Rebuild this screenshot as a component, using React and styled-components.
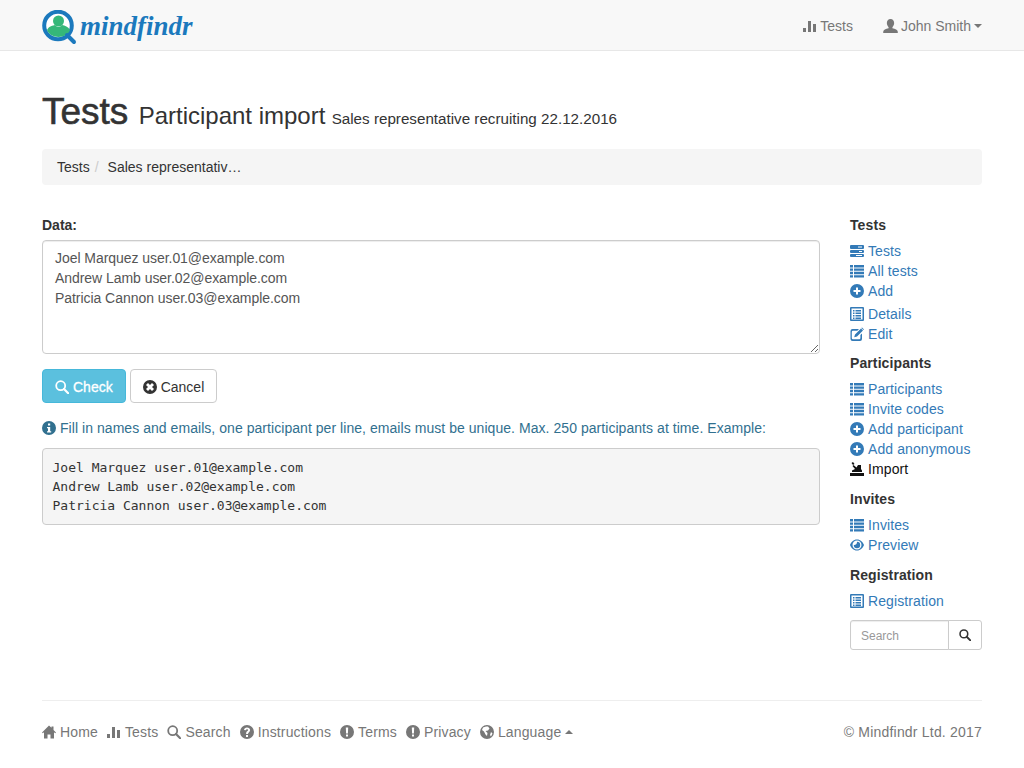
import React from "react";
import styled, { createGlobalStyle } from "styled-components";

const Global = createGlobalStyle`
  * { box-sizing: border-box; }
  html, body { margin: 0; padding: 0; }
  body {
    font-family: "Liberation Sans", Arial, sans-serif;
    font-size: 14px;
    line-height: 20px;
    color: #333;
    background: #fff;
  }
`;

const Navbar = styled.header`
  height: 51px;
  background: #f8f8f8;
  border-bottom: 1px solid #e7e7e7;
`;

const Wrap = styled.div`
  width: 940px;
  margin: 0 0 0 42px;
`;

const NavInner = styled(Wrap)`
  height: 50px;
  display: flex;
  align-items: center;
  justify-content: space-between;
`;

const Brand = styled.div`
  display: flex;
  align-items: center;
  height: 50px;
  padding-top: 5px;
`;

const BrandText = styled.span`
  font-family: "Liberation Serif", serif;
  font-style: italic;
  font-weight: 700;
  font-size: 27px;
  line-height: 36px;
  color: #1b79bd;
  margin-left: 2px;
  margin-top: -4px;
`;

const NavLinks = styled.nav`
  display: flex;
  gap: 30px;
  padding-top: 2px;
`;

const NavLink = styled.span`
  display: inline-flex;
  align-items: center;
  gap: 3px;
  color: #777;
`;

const Caret = styled.i`
  display: inline-block;
  width: 0;
  height: 0;
  margin-left: 0;
  border-left: 4px solid transparent;
  border-right: 4px solid transparent;
  ${(p) => (p.$up ? "border-bottom: 4px solid #777;" : "border-top: 4px solid #777;")}
`;

const Heading = styled.h1`
  margin: 41px 0 0;
  font-size: 37px;
  line-height: 40px;
  font-weight: 500;
  color: #333;
  -webkit-text-stroke: 0.6px #333;
  white-space: nowrap;
`;

const Sub = styled.small`
  font-size: 24px;
  color: #333;
  font-weight: 400;
  -webkit-text-stroke: 0;
`;

const SubSmall = styled.small`
  font-size: 15.2px;
  color: #333;
  font-weight: 400;
  margin-left: -4px;
  -webkit-text-stroke: 0;
`;

const Breadcrumb = styled.div`
  margin-top: 10px;
  height: 36px;
  padding: 8px 15px;
  background: #f5f5f5;
  border-radius: 4px;
  display: flex;
`;

const Sep = styled.span`
  color: #ccc;
  padding: 0 5px;
  margin-right: 4px;
`;

const Columns = styled.div`
  display: flex;
  justify-content: space-between;
  margin-top: 30px;
`;

const Main = styled.main`
  width: 778px;
`;

const Label = styled.label`
  display: block;
  font-weight: 700;
  margin-top: 0;
  margin-bottom: 5px;
`;

const TextArea = styled.textarea`
  display: block;
  width: 778px;
  height: 114px;
  padding: 7px 12px;
  border: 1px solid #ccc;
  border-radius: 4px;
  font: 14px/20px "Liberation Sans", Arial, sans-serif;
  letter-spacing: -0.05px;
  color: #555;
  box-shadow: inset 0 1px 1px rgba(0, 0, 0, 0.075);
`;

const Buttons = styled.div`
  display: flex;
  gap: 4px;
  margin-top: 15px;
`;

const Button = styled.button`
  display: inline-flex;
  align-items: center;
  gap: 4px;
  height: 34px;
  padding: 2px 12px 0;
  border: 1px solid ${(p) => (p.$info ? "#46b8da" : "#ccc")};
  border-radius: 4px;
  background: ${(p) => (p.$info ? "#5bc0de" : "#fff")};
  color: ${(p) => (p.$info ? "#fff" : "#333")};
  font: 14px/20px "Liberation Sans", Arial, sans-serif;
  -webkit-text-stroke: ${(p) => (p.$info ? "0.3px #fff" : "0")};
`;

const Help = styled.p`
  display: flex;
  align-items: center;
  gap: 4px;
  margin: 15px 0 0;
  color: #31708f;
  letter-spacing: 0.05px;
`;

const Pre = styled.pre`
  margin: 10px 0 0;
  padding: 8.5px 9.5px;
  height: 77px;
  font-family: "DejaVu Sans Mono", "Liberation Mono", monospace;
  font-size: 13px;
  line-height: 19px;
  color: #333;
  background: #f5f5f5;
  border: 1px solid #ccc;
  border-radius: 4px;
`;

const Side = styled.aside`
  width: 132px;
  letter-spacing: 0.1px;
`;

const SideTitle = styled.div`
  font-weight: 700;
  margin-top: ${(p) => p.$top}px;
  margin-bottom: 6px;
`;

const SideLink = styled.div`
  display: flex;
  align-items: center;
  gap: 4px;
  height: 20px;
  margin-top: ${(p) => (p.$gap ? "3px" : "0")};
  color: ${(p) => (p.$dark ? "#111" : "#337ab7")};
`;

const SearchGroup = styled.div`
  display: flex;
  height: 30px;
  margin-top: 9px;
`;

const SearchInput = styled.input`
  width: 99px;
  height: 30px;
  padding: 6px 10px 4px;
  border: 1px solid #ccc;
  border-radius: 3px 0 0 3px;
  font: 12px/18px "Liberation Sans", Arial, sans-serif;
  box-shadow: inset 0 1px 1px rgba(0, 0, 0, 0.075);
  &::placeholder { color: #999; }
`;

const SearchButton = styled.button`
  width: 34px;
  height: 30px;
  margin-left: -1px;
  padding: 0;
  display: flex;
  align-items: center;
  justify-content: center;
  background: #fff;
  border: 1px solid #ccc;
  border-radius: 0 3px 3px 0;
`;

const Footer = styled.footer`
  margin-top: 50px;
  border-top: 1px solid #eee;
  padding-top: 21px;
  display: flex;
  justify-content: space-between;
  color: #777;
`;

const FootLinks = styled.div`
  display: flex;
  gap: 9px;
  letter-spacing: 0.15px;
`;

const FootLink = styled.span`
  display: inline-flex;
  align-items: center;
  gap: 4px;
`;

const Copyright = styled.span`
  letter-spacing: 0.2px;
`;

// all drawn on a 14x14 grid, like the glyphicons they stand in for
const icons = {
  stats: <path d="M0 9h3v4H0zM5 2h3v11H5zM10 5h3v8h-3z" />,
  user: <path d="M7 0c2.200 0 3.400 1.600 3.400 3.800 0 1.600-.7 3-1.600 3.800v1.100c2.600.7 5 1.500 5 3.300v1H.2v-1c0-1.800 2.400-2.600 5-3.300V7.600C4.300 6.800 3.600 5.400 3.600 3.800 3.600 1.600 4.800 0 7 0z" />,
  tasks: <path fillRule="evenodd" d="M1 1h12a1 1 0 0 1 1 1v2a1 1 0 0 1-1 1H1a1 1 0 0 1-1-1V2a1 1 0 0 1 1-1zm7 1.500v1h4v-1zM1 6h12a1 1 0 0 1 1 1v1a1 1 0 0 1-1 1H1a1 1 0 0 1-1-1V7a1 1 0 0 1 1-1zm8 1v1h3V7zM1 10h12a1 1 0 0 1 1 1v1a1 1 0 0 1-1 1H1a1 1 0 0 1-1-1v-1a1 1 0 0 1 1-1zm5 1v1h6v-1z" />,
  list: <path d="M0 1h3v2.400H0zM4 1h10v2.400H4zM0 4.400h3v2.400H0zM4 4.400h10v2.400H4zM0 7.800h3v2.400H0zM4 7.800h10v2.400H4zM0 11.200h3v2.400H0zM4 11.200h10v2.400H4z" />,
  plus: <path fillRule="evenodd" d="M7 0a7 7 0 1 1 0 14A7 7 0 0 1 7 0zM6 3.500V6H3.500v2H6v2.500h2V8h2.500V6H8V3.500z" />,
  details: <path fillRule="evenodd" d="M1 0h12a1 1 0 0 1 1 1v12a1 1 0 0 1-1 1H1a1 1 0 0 1-1-1V1a1 1 0 0 1 1-1zm.5 1.500v11h11v-11zM3 3h1.500v1.500H3zM5.500 3H11v1.500H5.500zM3 5.500h1.500V7H3zM5.500 5.500H11V7H5.500zM3 8h1.500v1.500H3zM5.500 8H11v1.500H5.500zM3 10.500h1.500V12H3zM5.500 10.500H11V12H5.500z" />,
  edit: <path fillRule="evenodd" d="M2.500 2H9L7.300 3.700H3a1.200 1.200 0 0 0-1.200 1.200v6.200A1.200 1.200 0 0 0 3 12.300h6.200a1.200 1.200 0 0 0 1.200-1.200V8L12 6.400V12a2 2 0 0 1-2 2H2.500a2 2 0 0 1-2-2V4a2 2 0 0 1 2-2zM11 1.500l2 2-6 6-2.800.8L5 7.500zM12 .5l2 2-.6.6-2-2z" />,
  importIcon: <path d="M0 11h14v3H0zM2 10V8.500L5 7 2.500 4 3.500 3l3 2.500L8 3h3v4l1 1.500V10zM1.500 1 3 0l1.500 2-1.500 1z" />,
  eye: <path fillRule="evenodd" d="M7 1.500c3.500 0 6 2.700 7 5.500-1 2.800-3.500 5.500-7 5.500S1 9.800 0 7c1-2.800 3.500-5.500 7-5.500zm0 1A4.500 4.500 0 1 0 7 11.500 4.500 4.500 0 0 0 7 2.500zM7 3.800A3.200 3.200 0 1 1 3.800 7c.9.500 3.500-.5 3.200-3.200z" />,
  info: <path fillRule="evenodd" d="M7 0a7 7 0 1 1 0 14A7 7 0 0 1 7 0zM6 2.500v2h2.200v-2zM5 6v1.200h1v3H5v1.200h4.200v-1.200h-1V6z" />,
  question: <path fillRule="evenodd" d="M7 0a7 7 0 1 1 0 14A7 7 0 0 1 7 0zM6 10v2h2v-2zM7 2.500C5.300 2.500 4.200 3.400 4 5l1.800.3c.1-.7.5-1.100 1.200-1.100.6 0 1.100.4 1.100.9 0 1-2 1.200-2 3.400V9h1.900c0-1.700 2.100-1.800 2.100-4C10 3.500 8.800 2.500 7 2.500z" />,
  alert: <path fillRule="evenodd" d="M7 0a7 7 0 1 1 0 14A7 7 0 0 1 7 0zM5.800 2.500l.3 6h1.800l.3-6zM6 9.500v2h2v-2z" />,
  cancel: <path fillRule="evenodd" d="M7 0a7 7 0 1 1 0 14A7 7 0 0 1 7 0zM5 3 3 5l2 2-2 2 2 2 2-2 2 2 2-2-2-2 2-2-2-2-2 2z" />,
  globe: <path fillRule="evenodd" d="M7 0a7 7 0 1 1 0 14A7 7 0 0 1 7 0zM6 1.500 3 2.500 2 5l2 1.500 1.500 3L7 11l.5-3-2-2L8 5.500l1.500-2L8 1.600zM11 7l-1 3 1 1.500 1.500-3z" />,
  home: <path d="M7 .5 0 7.500 .8 8.300 2 7.300V13.500h3.500V9.500h3v4H12V7.300l1.200 1 .8-.8-2.500-2.500V1.500h-2v1.300z" />,
};

function Icon({ name, size = 14, color = "currentColor" }) {
  return (
    <svg width={size} height={size} viewBox="0 0 14 14" fill={color} style={{ flex: "none" }}>
      {icons[name]}
    </svg>
  );
}

function SearchIcon({ size = 14, color = "currentColor" }) {
  return (
    <svg width={size} height={size} viewBox="0 0 14 14" fill="none" stroke={color} style={{ flex: "none" }}>
      <circle cx="5.700" cy="5.700" r="4.500" strokeWidth="1.800" />
      <path d="M9 9l4.200 4.200" strokeWidth="2.200" strokeLinecap="round" />
    </svg>
  );
}

function Logo() {
  return (
    <svg width="36" height="36" viewBox="0 0 36 36" style={{ flex: "none" }}>
      <circle cx="16" cy="15.500" r="13.800" fill="#fff" stroke="#1b79bd" strokeWidth="4" />
      <circle cx="16.500" cy="11" r="5.500" fill="#35b779" />
      <path d="M5 20c2-4 6-4.500 8-5 2 2.500 5 2.500 7 0 3 .5 6 1.500 8 5-1.500 4-6 7-11.500 7S6.500 24 5 20z" fill="#35b779" />
      <path d="M25 25l7 7" stroke="#1b79bd" strokeWidth="4" strokeLinecap="round" />
    </svg>
  );
}

const sample = "Joel Marquez user.01@example.com\nAndrew Lamb user.02@example.com\nPatricia Cannon user.03@example.com";

const sideMenu = [
  {
    title: "Tests",
    top: 0,
    links: [
      { icon: "tasks", label: "Tests" },
      { icon: "list", label: "All tests" },
      { icon: "plus", label: "Add" },
      { icon: "details", label: "Details", gap: true },
      { icon: "edit", label: "Edit" },
    ],
  },
  {
    title: "Participants",
    top: 9,
    links: [
      { icon: "list", label: "Participants" },
      { icon: "list", label: "Invite codes" },
      { icon: "plus", label: "Add participant" },
      { icon: "plus", label: "Add anonymous" },
      { icon: "importIcon", label: "Import", dark: true },
    ],
  },
  {
    title: "Invites",
    top: 10,
    links: [
      { icon: "list", label: "Invites" },
      { icon: "eye", label: "Preview" },
    ],
  },
  {
    title: "Registration",
    top: 10,
    links: [{ icon: "details", label: "Registration" }],
  },
];

const footerLinks = [
  { icon: "home", label: "Home" },
  { icon: "stats", label: "Tests" },
  { search: true, label: "Search" },
  { icon: "question", label: "Instructions" },
  { icon: "alert", label: "Terms" },
  { icon: "alert", label: "Privacy" },
  { icon: "globe", label: "Language", caret: true },
];

function App() {
  return (
    <>
      <Global />
      <Navbar>
        <NavInner>
          <Brand>
            <Logo />
            <BrandText>mindfindr</BrandText>
          </Brand>
          <NavLinks>
            <NavLink><Icon name="stats" />Tests</NavLink>
            <NavLink><Icon name="user" size={15} />John Smith<Caret /></NavLink>
          </NavLinks>
        </NavInner>
      </Navbar>
      <Wrap>
        <Heading>
          Tests <Sub>Participant import</Sub> <SubSmall>Sales representative recruiting 22.12.2016</SubSmall>
        </Heading>
        <Breadcrumb>
          <span>Tests</span>
          <Sep>/</Sep>
          <span>Sales representativ…</span>
        </Breadcrumb>
        <Columns>
          <Main>
            <Label>Data:</Label>
            <TextArea defaultValue={sample} />
            <Buttons>
              <Button $info><SearchIcon />Check</Button>
              <Button><Icon name="cancel" />Cancel</Button>
            </Buttons>
            <Help>
              <Icon name="info" />
              Fill in names and emails, one participant per line, emails must be unique. Max. 250 participants at time. Example:
            </Help>
            <Pre>{sample}</Pre>
          </Main>
          <Side>
            {sideMenu.map((group) => (
              <div key={group.title}>
                <SideTitle $top={group.top}>{group.title}</SideTitle>
                {group.links.map((l) => (
                  <SideLink key={l.label} $gap={l.gap} $dark={l.dark}>
                    <Icon name={l.icon} />
                    {l.label}
                  </SideLink>
                ))}
              </div>
            ))}
            <SearchGroup>
              <SearchInput placeholder="Search" />
              <SearchButton><SearchIcon size={12} color="#333" /></SearchButton>
            </SearchGroup>
          </Side>
        </Columns>
        <Footer>
          <FootLinks>
            {footerLinks.map((l) => (
              <FootLink key={l.label}>
                {l.search ? <SearchIcon /> : <Icon name={l.icon} />}
                {l.label}
                {l.caret && <Caret $up />}
              </FootLink>
            ))}
          </FootLinks>
          <Copyright>© Mindfindr Ltd. 2017</Copyright>
        </Footer>
      </Wrap>
    </>
  );
}

export default App;
